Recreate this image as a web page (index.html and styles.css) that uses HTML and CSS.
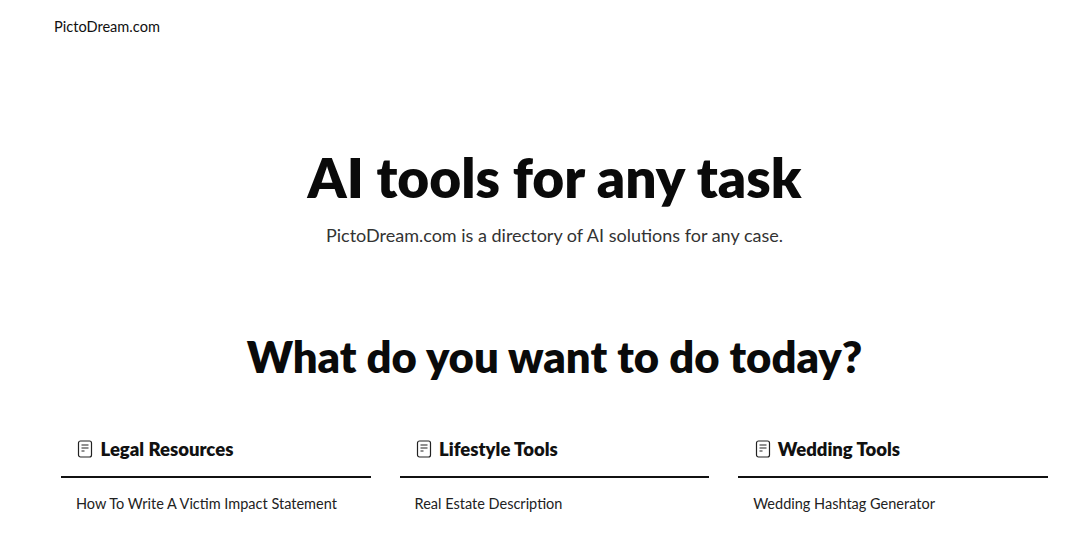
FILE: index.html
```html
<!DOCTYPE html>
<html lang="en">
<head>
  <meta charset="UTF-8">
  <title>PictoDream.com</title>
  <link rel="stylesheet" href="styles.css">
</head>
<body>
  <div class="brand">PictoDream.com</div>
  <div class="hero">
    <h1>AI tools for any task</h1>
    <p>PictoDream.com is a directory of AI solutions for any case.</p>
    <h2>What do you want to do today?</h2>
  </div>
  <div class="columns">
    <div class="column">
      <div class="column-head">
        <svg class="icon" viewBox="0 0 16 18"><rect x="1.5" y="1" width="13" height="16" rx="2"/><path d="M4.5 5h7M4.5 8h7M4.5 11h3"/></svg>
        <h3>Legal Resources</h3>
      </div>
      <a class="tool">How To Write A Victim Impact Statement</a>
    </div>
    <div class="column">
      <div class="column-head">
        <svg class="icon" viewBox="0 0 16 18"><rect x="1.5" y="1" width="13" height="16" rx="2"/><path d="M4.5 5h7M4.5 8h7M4.5 11h3"/></svg>
        <h3>Lifestyle Tools</h3>
      </div>
      <a class="tool">Real Estate Description</a>
    </div>
    <div class="column">
      <div class="column-head">
        <svg class="icon" viewBox="0 0 16 18"><rect x="1.5" y="1" width="13" height="16" rx="2"/><path d="M4.5 5h7M4.5 8h7M4.5 11h3"/></svg>
        <h3>Wedding Tools</h3>
      </div>
      <a class="tool">Wedding Hashtag Generator</a>
    </div>
  </div>
</body>
</html>
```

FILE: styles.css
```css
html, body { height: 557px; overflow: hidden; }
body { margin: 0; background: #fff; color: #000; font-family: "Lato", sans-serif; }
.brand { padding: 18px 0 0 54px; font-size: 14.6px; line-height: 18px; color: #111; }
.hero { margin-top: 107px; padding-left: 29px; text-align: center; }
h1 { margin: 0; font-size: 55px; line-height: 68px; font-weight: 800; color: #0a0a0a; }
.hero p { margin: 11px 0 0; font-size: 18px; line-height: 26px; color: #333; }
h2 { margin: 80px 0 0; font-size: 43.6px; line-height: 56px; font-weight: 800; color: #0a0a0a; }
.columns { display: grid; grid-template-columns: repeat(3, 309.6px); column-gap: 29px; margin: 49px 0 0 61.2px; }
.column-head { display: flex; align-items: center; gap: 7px; height: 31px; padding: 0 0 12px 16.3px; border-bottom: 2px solid #111; }
.column-head h3 { margin: 0; font-size: 18.5px; font-weight: 800; color: #111; }
.icon { width: 16px; height: 18px; fill: none; stroke: #222; stroke-width: 1.2; }
.tool { display: block; margin-top: 16px; padding-left: 14.8px; font-size: 14.5px; line-height: 20px; color: #222; }
```
